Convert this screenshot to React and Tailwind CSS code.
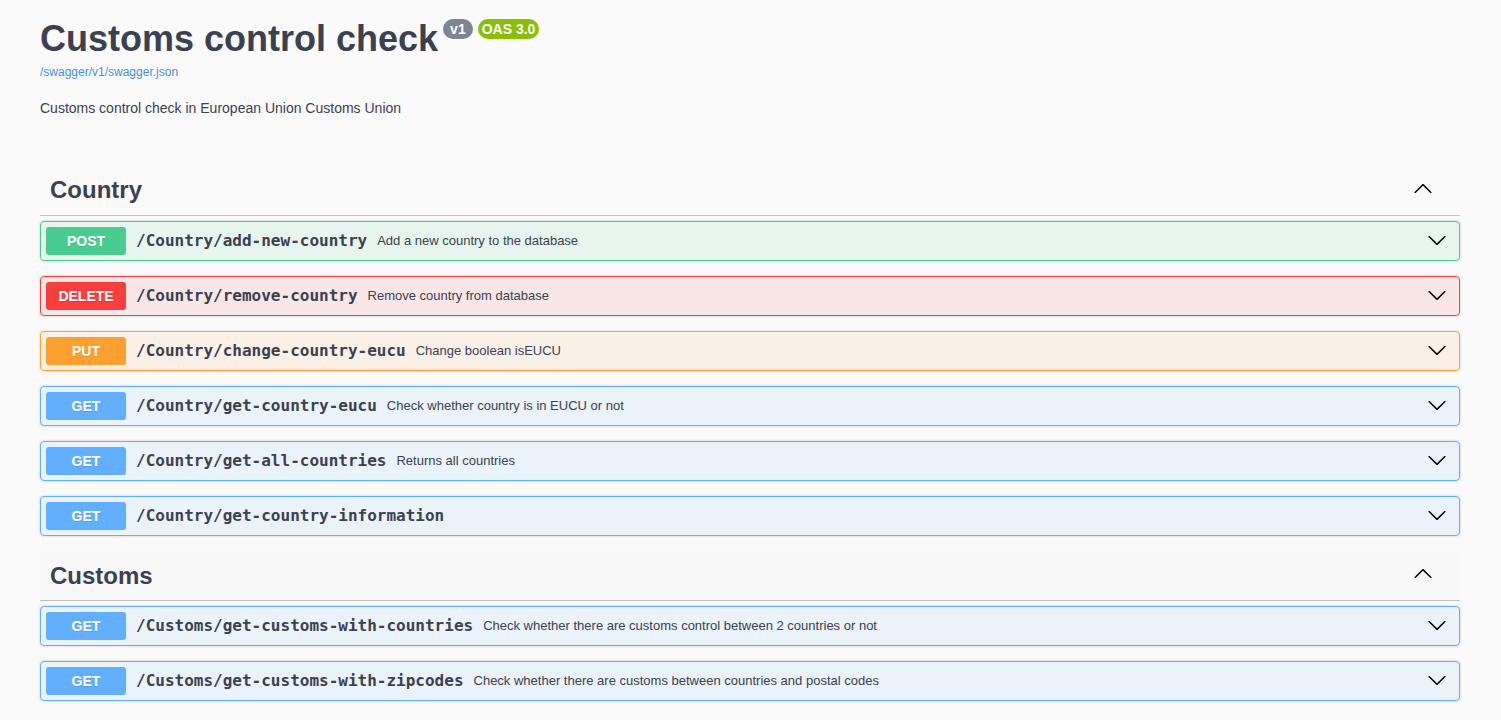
import React from 'react';

const methodStyles = {
  POST: { box: 'bg-[#49cc90]/10 border-[#49cc90]', badge: 'bg-[#49cc90]' },
  DELETE: { box: 'bg-[#f93e3e]/10 border-[#f93e3e]', badge: 'bg-[#f93e3e]' },
  PUT: { box: 'bg-[#fca130]/10 border-[#fca130]', badge: 'bg-[#fca130]' },
  GET: { box: 'bg-[#61affe]/10 border-[#61affe]', badge: 'bg-[#61affe]' },
};

const sections = [
  {
    name: 'Country',
    ops: [
      { method: 'POST', path: '/Country/add-new-country', desc: 'Add a new country to the database' },
      { method: 'DELETE', path: '/Country/remove-country', desc: 'Remove country from database' },
      { method: 'PUT', path: '/Country/change-country-eucu', desc: 'Change boolean isEUCU' },
      { method: 'GET', path: '/Country/get-country-eucu', desc: 'Check whether country is in EUCU or not' },
      { method: 'GET', path: '/Country/get-all-countries', desc: 'Returns all countries' },
      { method: 'GET', path: '/Country/get-country-information', desc: '' },
    ],
  },
  {
    name: 'Customs',
    hover: true,
    ops: [
      { method: 'GET', path: '/Customs/get-customs-with-countries', desc: 'Check whether there are customs control between 2 countries or not' },
      { method: 'GET', path: '/Customs/get-customs-with-zipcodes', desc: 'Check whether there are customs between countries and postal codes' },
    ],
  },
];

function Arrow({ up }) {
  return (
    <svg width="20" height="20" viewBox="0 0 20 20" className={up ? 'rotate-180' : ''}>
      <path
        fill="#000"
        d="M17.418 6.109c.272-.268.709-.268.979 0s.271.701 0 .969l-7.908 7.83c-.27.268-.707.268-.979 0l-7.908-7.83c-.27-.268-.27-.701 0-.969.271-.268.709-.268.979 0L10 13.25l7.418-7.141z"
      />
    </svg>
  );
}

function Operation({ method, path, desc }) {
  const s = methodStyles[method];
  return (
    <div className={`mb-[15px] rounded border shadow-[0_0_3px_rgba(0,0,0,0.19)] ${s.box}`}>
      <div className="flex items-center p-[5px] h-[38px]">
        <span className={`${s.badge} w-20 h-[28px] flex items-center justify-center rounded-[3px] text-white text-[14px] font-bold [text-shadow:0_1px_0_rgba(0,0,0,0.1)]`}>
          {method}
        </span>
        <span className="px-[10px] text-[16px] font-bold text-[#3b4151] font-['DejaVu_Sans_Mono',monospace]">{path}</span>
        <span className="text-[13px] text-[#3b4151] flex-1">{desc}</span>
        <span className="pr-[7px] pl-2 flex items-center -mt-[3px]"><Arrow /></span>
      </div>
    </div>
  );
}

export default function App() {
  return (
    <div className="min-h-screen bg-[#fafafa] font-['Liberation_Sans',Arial,sans-serif] text-[#3b4151] pl-10 pr-[41px]">
      <div className="pt-[16px]">
        <div className="flex items-start">
          <h2 className="text-[36px] font-bold leading-[46px] text-[#3b4151]">Customs control check</h2>
          <span className="ml-[5px] mt-[3px] bg-[#7d8492] text-white text-[14px] font-bold leading-4 px-[7px] py-[2px] rounded-full">v1</span>
          <span className="ml-[5px] mt-[3px] bg-[#89bf04] text-white text-[14px] font-bold leading-4 px-[4px] py-[2px] rounded-full">OAS 3.0</span>
        </div>
        <a className="block text-[12px] text-[#4990e2] leading-4 mt-[2px]">/swagger/v1/swagger.json</a>
        <p className="text-[14px] leading-5 mt-[18px]">Customs control check in European Union Customs Union</p>
      </div>
      <div className="mt-[47px]">
        {sections.map(sec => (
          <div key={sec.name}>
            <div className={`flex items-center pl-[10px] pr-[27px] border-b border-[#3b4151]/30 mb-[5px] ${sec.hover ? 'bg-[#f8f8f8] h-[50px]' : 'h-[51px]'}`}>
              <span className="text-[24px] font-bold flex-1">{sec.name}</span>
              <span className="-mt-[3px] flex"><Arrow up /></span>
            </div>
            {sec.ops.map(op => (
              <Operation key={op.path} {...op} />
            ))}
          </div>
        ))}
      </div>
    </div>
  );
}
